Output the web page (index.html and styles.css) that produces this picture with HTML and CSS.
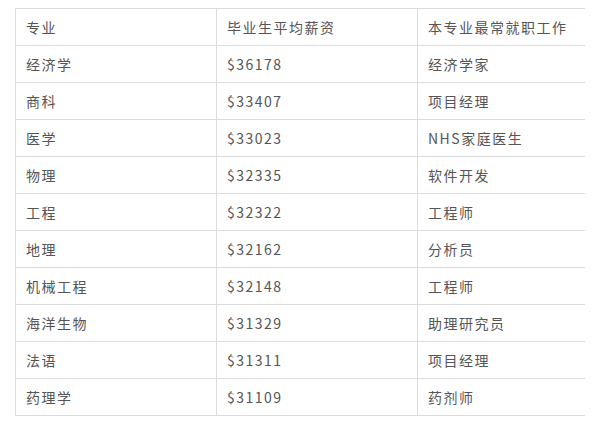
FILE: index.html
```html
<!DOCTYPE html>
<html lang="zh">
<head>
<meta charset="utf-8">
<link rel="stylesheet" href="styles.css">
</head>
<body>
<div class="wrap">
<table class="salary">
<colgroup><col class="c1"><col class="c2"><col class="c3"></colgroup>
<tr><td>专业</td><td>毕业生平均薪资</td><td>本专业最常就职工作</td></tr>
<tr><td>经济学</td><td>$36178</td><td>经济学家</td></tr>
<tr><td>商科</td><td>$33407</td><td>项目经理</td></tr>
<tr><td>医学</td><td>$33023</td><td>NHS家庭医生</td></tr>
<tr><td>物理</td><td>$32335</td><td>软件开发</td></tr>
<tr><td>工程</td><td>$32322</td><td>工程师</td></tr>
<tr><td>地理</td><td>$32162</td><td>分析员</td></tr>
<tr><td>机械工程</td><td>$32148</td><td>工程师</td></tr>
<tr><td>海洋生物</td><td>$31329</td><td>助理研究员</td></tr>
<tr><td>法语</td><td>$31311</td><td>项目经理</td></tr>
<tr><td>药理学</td><td>$31109</td><td>药剂师</td></tr>
</table>
</div>
</body>
</html>
```
FILE: styles.css
```css
html, body { margin: 0; padding: 0; background: #fff; }
.wrap { padding: 8px 0 0 15px; }
.salary {
  border-collapse: collapse;
  table-layout: fixed;
  width: 569px;
  font-family: "Microsoft YaHei", "Noto Sans CJK SC", sans-serif;
  font-size: 14px;
  color: #555;
  letter-spacing: 1.5px;
}
.c1 { width: 201px; }
.c2 { width: 201px; }
.c3 { width: 167px; }
.salary td {
  border: 1px solid #dcdcdc;
  height: 37px;
  padding: 0 0 0 10px;
  box-sizing: border-box;
  vertical-align: middle;
  white-space: nowrap;
  line-height: 20px;
}
.salary td:last-child { border-right: none; }
```
